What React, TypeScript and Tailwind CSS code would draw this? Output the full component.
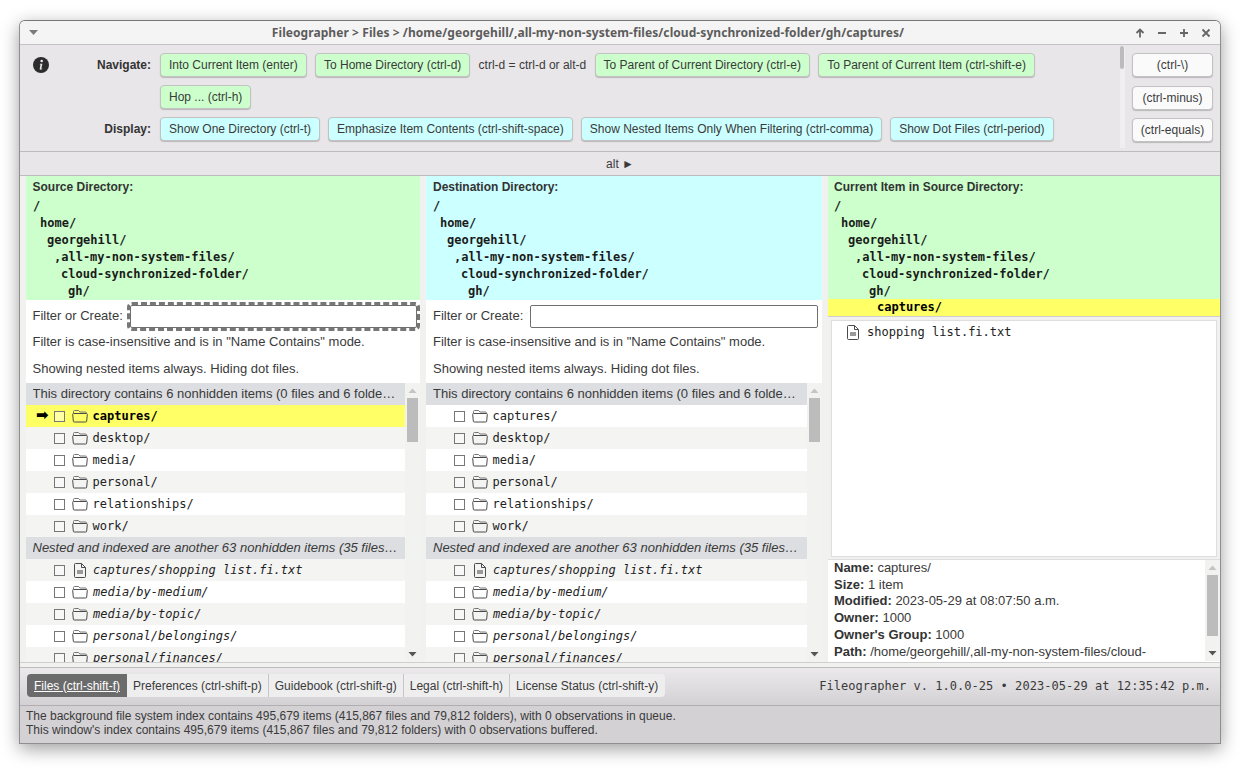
import React from "react";

const sans = "font-['Liberation_Sans',Arial,sans-serif]";
const mono = "font-['DejaVu_Sans_Mono',monospace]";

function Btn({ t, c }: { t: string; c: "g" | "b" | "w" }) {
  const bg = c === "g" ? "bg-[#ccffcc]" : c === "b" ? "bg-[#ccffff]" : "bg-[#fafafa]";
  return (
    <div className={`${bg} h-[24px] shrink-0 px-[8px] flex items-center justify-center rounded-[4px] border border-[#c2c2c2] shadow-[0_1px_1px_rgba(0,0,0,0.2)] text-[12px] text-[#3a3a3a] whitespace-nowrap`}>
      {t}
    </div>
  );
}

function Folder() {
  return (
    <svg width="16" height="14" viewBox="0 0 16 14" fill="none" stroke="#4a4a4a" strokeWidth="1" className="shrink-0">
      <path d="M1.5 4V2.5a1 1 0 0 1 1-1h4l1.5 1.5h5.5a1 1 0 0 1 1 1V4" stroke="#777" />
      <path d="M1.5 4.5h13a.8.8 0 0 1 .8.8l-.6 6.7a1 1 0 0 1-1 1H2.3a1 1 0 0 1-1-1L.7 5.3a.8.8 0 0 1 .8-.8z" />
    </svg>
  );
}

function FileIcon() {
  return (
    <svg width="12" height="15" viewBox="0 0 12 15" fill="none" className="shrink-0">
      <path d="M1.5.5h6l4 4v9a1 1 0 0 1-1 1h-9a1 1 0 0 1-1-1v-12a1 1 0 0 1 1-1z" stroke="#4a4a4a" />
      <path d="M7.5.5v4h4" stroke="#4a4a4a" />
      <rect x="3" y="7" width="6" height="4" fill="#999" />
    </svg>
  );
}

type Item = { n: string; f?: boolean };
const top: Item[] = [
  { n: "captures/" },
  { n: "desktop/" },
  { n: "media/" },
  { n: "personal/" },
  { n: "relationships/" },
  { n: "work/" },
];
const nested: Item[] = [
  { n: "captures/shopping list.fi.txt", f: true },
  { n: "media/by-medium/" },
  { n: "media/by-topic/" },
  { n: "personal/belongings/" },
  { n: "personal/finances/" },
];

function Row({ item, i, current, italic }: { item: Item; i: number; current?: boolean; italic?: boolean }) {
  const bg = current ? "bg-[#ffff66]" : i % 2 === 1 ? "bg-[#f4f4f3]" : "bg-white";
  return (
    <div className={`${bg} h-[22px] shrink-0 flex items-center relative`}>
      {current && <span className="absolute left-[10px] top-0 text-[15px] font-bold text-black font-['DejaVu_Sans',sans-serif] leading-[20px]">➡</span>}
      <div className="w-[11px] h-[11px] border border-[#777] ml-[28px] shrink-0 bg-white/40" />
      <div className="w-[17px] ml-[6px] flex justify-center shrink-0">{item.f ? <FileIcon /> : <Folder />}</div>
      <span className={`${mono} text-[12px] whitespace-nowrap ${current ? "font-bold text-black" : "text-[#222]"} ${italic ? "italic ml-[5px]" : "ml-[4.6px]"}`}>{item.n}</span>
    </div>
  );
}

function Sb({ thumbTop, thumbH }: { thumbTop: number; thumbH: number }) {
  return (
    <div className="w-[15px] shrink-0 bg-[#f2f2f1] flex flex-col items-center relative">
      <svg width="9" height="6" viewBox="0 0 9 6" className="mt-[5px] shrink-0"><path d="M4.5 0.5 L8.5 5 H0.5z" fill="#c4c4c4" /></svg>
      <div className="w-[11px] bg-[#bcbcbc] shrink-0" style={{ marginTop: thumbTop, height: thumbH }} />
      <svg width="9" height="6" viewBox="0 0 9 6" className="mt-auto mb-[5px] shrink-0"><path d="M4.5 5.5 L8.5 1 H0.5z" fill="#555" /></svg>
    </div>
  );
}

function Tree({ current, base }: { current?: boolean; base: number }) {
  const lines = ["/", "home/", "georgehill/", ",all-my-non-system-files/", "cloud-synchronized-folder/", "gh/"];
  const pads = [0, 7, 14, 21, 28, 35];
  return (
    <div className={`${mono} text-[12px] font-bold text-[#1a1a1a] leading-[17px] mt-[2px]`}>
      {lines.map((l, i) => (
        <div key={i} className="h-[17px] whitespace-nowrap" style={{ paddingLeft: base + pads[i] }}>{l}</div>
      ))}
      {current && <div className="h-[17px] -mt-[1px] bg-[#ffff66] text-black" style={{ paddingLeft: 49 }}>captures/</div>}
    </div>
  );
}

function HeaderTitle({ t, pad }: { t: string; pad: string }) {
  return <div className={`${pad} pt-[4px] text-[12px] font-bold text-[#333] leading-[15px] h-[20px]`}>{t}</div>;
}

function SourceColumn({ title, head, focused, width, pad, hr }: { title: string; head: string; focused?: boolean; width: number; pad: string; hr: string }) {
  return (
    <div className="flex flex-col shrink-0 bg-white overflow-hidden h-[486px]" style={{ width }}>
      <div className={`${head} h-[124px] shrink-0`}>
        <HeaderTitle t={title} pad={pad} />
        <Tree base={7} />
      </div>
      <div className={`h-[30px] shrink-0 flex items-center ${pad} pt-[2px] relative text-[13px] text-[#3a3a3a]`}>
        <span>Filter or Create:</span>
        <div className={`${focused ? "ml-[7px] outline-[3px] outline-dashed outline-[#777] mr-[3px]" : "ml-[7px] mr-[4px]"} flex-1 h-[23px] bg-white border border-[#6f6f6f] rounded-[2px]`} />
      </div>
      <div className={`h-[26px] shrink-0 ${pad} flex items-center text-[13px] text-[#3a3a3a] leading-none pb-[4px] whitespace-nowrap`}>Filter is case-insensitive and is in "Name Contains" mode.</div>
      <div className={`h-[27px] shrink-0 ${pad} flex items-center text-[13px] text-[#3a3a3a] leading-none pb-[2px] whitespace-nowrap`}>Showing nested items always. Hiding dot files.</div>
      <div className="flex flex-1 min-h-0 overflow-hidden">
        <div className="flex-1 min-w-0 flex flex-col overflow-hidden">
          <div className={`h-[22px] shrink-0 bg-[#dcdee1] ${pad} ${hr} flex items-center text-[13px] text-[#3a3a3a] whitespace-nowrap overflow-hidden`}>
            <span className="truncate">This directory contains 6 nonhidden items (0 files and 6 folders)</span>
          </div>
          {top.map((it, i) => <Row key={it.n} item={it} i={i} current={focused && i === 0} />)}
          <div className={`h-[22px] shrink-0 bg-[#dcdee1] ${pad} pr-[7px] flex items-center text-[13px] italic text-[#3a3a3a] whitespace-nowrap overflow-hidden`}>
            <span className="truncate">Nested and indexed are another 63 nonhidden items (35 files and 28 folders)</span>
          </div>
          {nested.map((it, i) => <Row key={it.n} item={it} i={i + 1} italic />)}
        </div>
        <Sb thumbTop={4} thumbH={44} />
      </div>
    </div>
  );
}

function Info({ k, v }: { k: string; v: string }) {
  return <div className="h-[16.8px] leading-[16.8px] whitespace-nowrap"><b className="text-[#333]">{k}</b> {v}</div>;
}

export default function App() {
  return (
    <div className={`${sans} w-[1244px] h-[768px] bg-white pt-[20px] pl-[19px] overflow-hidden`}>
      <div className="w-[1202px] h-[724px] flex flex-col bg-[#e8e6e9] border border-[#8f8f8f] border-t-[#777] rounded-t-[6px] shadow-[0_5px_18px_rgba(0,0,0,0.38)] overflow-hidden">
        {/* title bar */}
        <div className="h-[24px] shrink-0 flex items-center bg-[#f5f4f4] border-b border-[#c4c2c4]">
          <div className="w-[26px] shrink-0 pl-[9px]">
            <svg width="9" height="5" viewBox="0 0 9 5"><path d="M0 0h9L4.5 5z" fill="#7b7b7b" /></svg>
          </div>
          <div className="flex-1 min-w-0 pt-[1px] text-center font-['Noto_Sans',sans-serif] font-bold text-[12px] tracking-[0.07px] text-[#5c5c5c] whitespace-nowrap">
            Fileographer &gt; Files &gt; /home/georgehill/,all-my-non-system-files/cloud-synchronized-folder/gh/captures/
          </div>
          <div className="w-[90px] shrink-0 flex items-center gap-[12px] pl-[5px]">
            <svg width="10" height="10" viewBox="0 0 10 10" fill="none" stroke="#666" strokeWidth="1.8"><path d="M5 9.5V1.5M1.5 5L5 1.5 8.5 5" /></svg>
            <svg width="10" height="10" viewBox="0 0 10 10" fill="none" stroke="#666" strokeWidth="1.8"><path d="M1 5h8" /></svg>
            <svg width="10" height="10" viewBox="0 0 10 10" fill="none" stroke="#666" strokeWidth="1.8"><path d="M1 5h8M5 1v8" /></svg>
            <svg width="10" height="10" viewBox="0 0 10 10" fill="none" stroke="#666" strokeWidth="1.8"><path d="M1.5 1.5l7 7M8.5 1.5l-7 7" /></svg>
          </div>
        </div>

        {/* toolbar */}
        <div className="h-[107px] shrink-0 flex border-b border-[#bdbbbd]">
          <div className="w-[29px] shrink-0 pl-[13px] pt-[12px]">
            <svg width="16" height="16" viewBox="0 0 16 16" className="shrink-0">
              <circle cx="8" cy="8" r="8" fill="#2c2c2c" />
              <circle cx="8.7" cy="4" r="1.3" fill="#e8e6e9" />
              <path d="M7 6.7h2.4L8.4 11.5c-.1.4.3.5.9.1l.1.4c-1 .9-2.9 1.1-2.7-.2l.8-4.2-.7-.2z" fill="#e8e6e9" />
            </svg>
          </div>
          <div className="w-[102px] shrink-0 flex flex-col text-right text-[12px] font-bold text-[#333]">
            <div className="h-[24px] mt-[8px] leading-[24px]">Navigate:</div>
            <div className="h-[24px] mt-[8px]" />
            <div className="h-[24px] mt-[8px] leading-[24px]">Display:</div>
          </div>
          <div className="flex flex-col ml-[9px]">
            <div className="flex items-center h-[24px] mt-[8px] gap-[8.25px]">
              <Btn t="Into Current Item (enter)" c="g" />
              <Btn t="To Home Directory (ctrl-d)" c="g" />
              <span className="text-[12px] text-[#3a3a3a] whitespace-nowrap">ctrl-d = ctrl-d or alt-d</span>
              <Btn t="To Parent of Current Directory (ctrl-e)" c="g" />
              <Btn t="To Parent of Current Item (ctrl-shift-e)" c="g" />
            </div>
            <div className="flex h-[24px] mt-[8px]"><Btn t="Hop ... (ctrl-h)" c="g" /></div>
            <div className="flex h-[24px] mt-[8px] gap-[8px]">
              <Btn t="Show One Directory (ctrl-t)" c="b" />
              <Btn t="Emphasize Item Contents (ctrl-shift-space)" c="b" />
              <Btn t="Show Nested Items Only When Filtering (ctrl-comma)" c="b" />
              <Btn t="Show Dot Files (ctrl-period)" c="b" />
            </div>
          </div>
          <div className="flex-1" />
          <div className="w-[5px] shrink-0 mt-[1px] mb-[3px] bg-[#efefef] relative">
            <div className="w-[4px] h-[23px] bg-[#bcbcbc] rounded-[2px]" />
          </div>
          <div className="w-[81px] shrink-0 ml-[7px] mr-[7px] flex flex-col pt-[8px]">
            <Btn t="(ctrl-\)" c="w" />
            <div className="mt-[9px]"><Btn t="(ctrl-minus)" c="w" /></div>
            <div className="mt-[8px]"><Btn t="(ctrl-equals)" c="w" /></div>
          </div>
        </div>

        {/* alt bar */}
        <div className="h-[24px] shrink-0 flex items-center justify-center border-b border-[#bdbbbd] text-[12px] text-[#3a3a3a]">
          <span>alt ►</span>
        </div>

        {/* columns */}
        <div className="h-[486px] shrink-0 flex pl-[6px] gap-[6px] bg-[#f1f1f0]">
          <SourceColumn title="Source Directory:" head="bg-[#ccffcc]" focused width={394} pad="pl-[6.5px]" hr="pr-[8px]" />
          <SourceColumn title="Destination Directory:" head="bg-[#ccffff]" width={396} pad="pl-[7px]" hr="pr-[10px]" />
          <div className="w-[392px] shrink-0 flex flex-col bg-white h-[486px] overflow-hidden">
            <div className="bg-[#ccffcc] h-[141px] shrink-0 border-b border-[#cfcfcf]">
              <HeaderTitle t="Current Item in Source Directory:" pad="pl-[6px]" />
              <Tree current base={6} />
            </div>
            <div className="h-[242px] shrink-0 bg-[#f1f1f0] p-[3px] pb-[2px]">
              <div className="h-full bg-white border border-[#dedede] pl-[15px] pt-[3px] flex items-start">
                <div className="flex items-center gap-[8px] h-[16px]">
                  <FileIcon />
                  <span className={`${mono} text-[12px] text-[#222] whitespace-nowrap`}>shopping list.fi.txt</span>
                </div>
              </div>
            </div>
            <div className="flex h-[102px] shrink-0 border-t border-[#dedede]">
              <div className="flex-1 pl-[6px] text-[13px] text-[#3a3a3a] overflow-hidden -mt-[0.3px]">
                <Info k="Name:" v="captures/" />
                <Info k="Size:" v="1 item" />
                <Info k="Modified:" v="2023-05-29 at 08:07:50 a.m." />
                <Info k="Owner:" v="1000" />
                <Info k="Owner's Group:" v="1000" />
                <Info k="Path:" v="/home/georgehill/,all-my-non-system-files/cloud-" />
              </div>
              <Sb thumbTop={4} thumbH={61} />
            </div>
          </div>
        </div>

        {/* tabs bar */}
        <div className="h-[6px] shrink-0 bg-[#f1f1f0] border-t border-[#cfcfcf] border-b border-b-[#bdbbbd]" />
        <div className="h-[38px] shrink-0 flex items-center pl-[7px] pr-[9px] pb-[2px] bg-gradient-to-b from-[#ebe9ec] to-[#d3d1d4] border-b border-[#b0aeb0] text-[12px]">
          <div className="flex h-[23px] rounded-[4px] overflow-hidden bg-[#efeeef] text-[#3a3a3a]">
            <div className="px-[7px] flex items-center bg-[#6b6b6b] text-white underline">Files (ctrl-shift-f)</div>
            <div className="px-[6px] flex items-center border-r border-[#c8c6c8]">Preferences (ctrl-shift-p)</div>
            <div className="px-[6px] flex items-center border-r border-[#c8c6c8]">Guidebook (ctrl-shift-g)</div>
            <div className="px-[6px] flex items-center border-r border-[#c8c6c8]">Legal (ctrl-shift-h)</div>
            <div className="pl-[6px] pr-[7px] flex items-center">License Status (ctrl-shift-y)</div>
          </div>
          <span className={`${mono} ml-auto text-[12px] tracking-[0.03px] text-[#3a3a3a] whitespace-nowrap`}>Fileographer v. 1.0.0-25 • 2023-05-29 at 12:35:42 p.m.</span>
        </div>

        {/* status */}
        <div className="flex-1 bg-[#d3d1d4] pl-[6px] pt-[3px] text-[12px] leading-[14px] text-[#3a3a3a]">
          <div>The background file system index contains 495,679 items (415,867 files and 79,812 folders), with 0 observations in queue.</div>
          <div>This window's index contains 495,679 items (415,867 files and 79,812 folders) with 0 observations buffered.</div>
        </div>
      </div>
    </div>
  );
}
